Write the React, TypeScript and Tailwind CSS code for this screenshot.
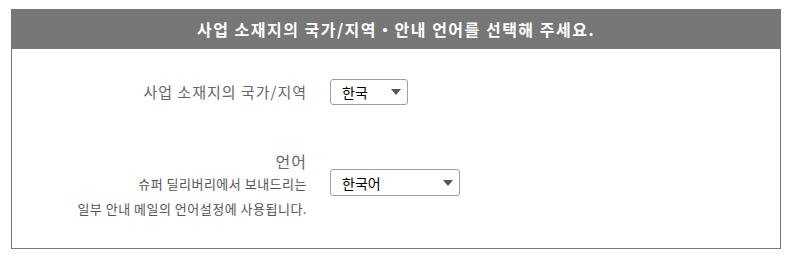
const font = { fontFamily: '"Noto Sans CJK KR", "Noto Sans", sans-serif' }

function Select({ value, width }: { value: string; width: string }) {
  return (
    <div
      className={`${width} flex items-center justify-between rounded-[3px] border border-[#a0a0a0] bg-white pl-[11px] pr-[6px] text-[14px] text-black`}
    >
      <span className="leading-none">{value}</span>
      <span className="h-0 w-0 border-x-[5px] border-t-[6px] border-x-transparent border-t-[#555]" />
    </div>
  )
}

export default function App() {
  return (
    <div className="min-h-[261px] bg-white pl-[11px] pt-[9px]" style={font}>
      <div className="h-[240px] w-[770px] border border-[#777] bg-white">
        {/* header */}
        <div className="-mx-px -mt-px flex h-[40px] items-center justify-center bg-[#777] text-[16px] font-bold tracking-[1.5px] text-white">
          사업 소재지의 국가/지역・안내 언어를 선택해 주세요.
        </div>

        {/* row 1 */}
        <div className="mt-[30px] flex h-[26px] items-center gap-[23px]">
          <div className="w-[295px] text-right text-[15px] tracking-[1px] text-[#666]">사업 소재지의 국가/지역</div>
          <Select value="한국" width="w-[78px] h-[26px]" />
        </div>

        {/* row 2 */}
        <div className="mt-[46px] flex items-start gap-[23px]">
          <div className="w-[295px] text-right text-[#555]">
            <div className="text-[16px] leading-[20px] tracking-[1px] text-[#666]">언어</div>
            <div className="text-[13px] leading-[25px] tracking-[0.5px]">슈퍼 딜리버리에서 보내드리는</div>
            <div className="text-[13px] leading-[25px] tracking-[0.5px]">일부 안내 메일의 언어설정에 사용됩니다.</div>
          </div>
          <div className="mt-[18px]">
            <Select value="한국어" width="w-[130px] h-[27px]" />
          </div>
        </div>
      </div>
    </div>
  )
}
